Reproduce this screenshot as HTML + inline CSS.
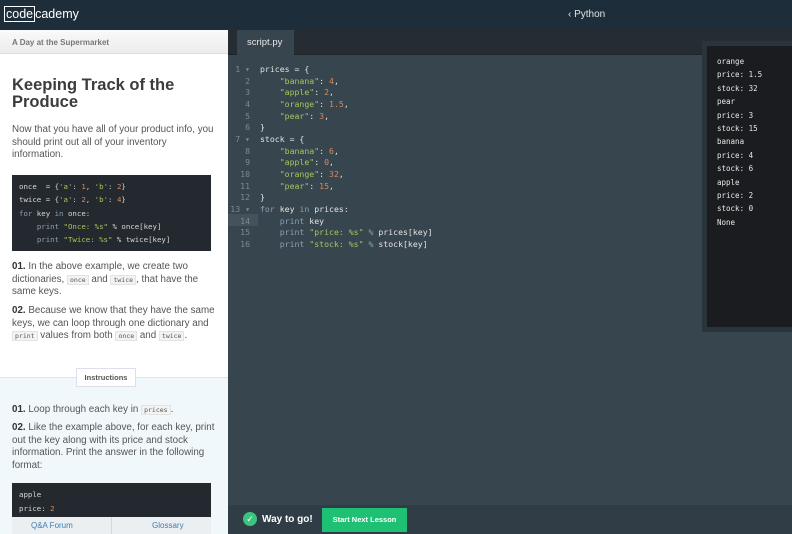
<!DOCTYPE html>
<html><head><style>
*{margin:0;padding:0;box-sizing:border-box}
body{width:792px;height:534px;overflow:hidden;font-family:"Liberation Sans","DejaVu Sans",sans-serif;background:#37454f;position:relative}
.top{position:absolute;left:0;top:0;width:792px;height:30px;background:#1d2d3a}
.logo{position:absolute;left:4px;top:7px;color:#fff;font-size:12.5px;font-family:"Liberation Sans",sans-serif}
.logo span{border:1.5px solid #fff;padding:0 1px}
.py{position:absolute;left:568px;top:9px;color:#dfe6ea;font-size:10px}
.left{position:absolute;left:0;top:30px;width:228px;height:504px;background:#fff;overflow:hidden}
.lh{height:24px;background:linear-gradient(#fafafa,#ececec);border-bottom:1px solid #ddd;font-size:8px;font-weight:bold;color:#777;padding:8px 12px}
h1{position:absolute;left:12px;top:47px;font-size:16.5px;line-height:17px;color:#3c3c3c;font-weight:bold;width:210px}
p{font-size:9.8px;line-height:12.7px;color:#555;position:absolute;left:12px;width:205px}
p b{color:#333}
code{font-family:"DejaVu Sans Mono",monospace;font-size:6.5px;background:#f3f3f3;border:1px solid #e3e3e3;padding:0 2px;color:#555}
.cb{position:absolute;left:12px;width:199px;background:#23292e;font-family:"DejaVu Sans Mono",monospace;font-size:7.4px;line-height:13.3px;color:#d8d8d8;padding:5px 7px;white-space:pre}
.s{color:#a6c65b}.n{color:#d68a5d}.k{color:#8aa0b5}
.instr{position:absolute;left:0;top:347px;width:228px;height:160px;background:#f1f8fc;border-top:1px solid #dbe7ee}
.ibtn{position:absolute;left:76px;top:338px;width:60px;height:19px;background:#fff;border:1px solid #dde;font-size:7.5px;font-weight:bold;color:#555;text-align:center;line-height:17px}
.foot{position:absolute;left:12px;top:487px;width:199px;height:17px;background:#eceff1;font-size:8px;color:#3a7fb5}
.foot div{position:absolute;top:4px}
.tabs{position:absolute;left:228px;top:30px;width:564px;height:25px;background:#252d33;border-bottom:1px solid #1e2428}
.tab{position:absolute;left:9px;top:0;width:57px;height:25px;background:#37454f;color:#e6e6e6;font-size:9.5px;padding:7px 10px}
.code{position:absolute;left:228px;top:64px;font-family:"DejaVu Sans Mono",monospace;font-size:8.2px;line-height:11.67px;color:#e3e3e3;white-space:pre}
.ln{display:inline-block;width:22px;text-align:right;color:#7b8a94;margin-right:10px}
.hl{position:absolute;left:228px;top:214px;width:30px;height:12px;background:#44525c}
.out{position:absolute;left:702px;top:41px;width:92px;height:291px;background:#2a343b;padding:5px 0 5px 5px}
.out div{background:#1b1c1f;height:100%;font-family:"DejaVu Sans Mono",monospace;font-size:7.5px;line-height:13.4px;color:#e8e8e8;padding:9px 10px;white-space:pre}
.bot{position:absolute;left:228px;top:505px;width:564px;height:29px;background:#303d46}
.chk{position:absolute;left:243px;top:512px;width:14px;height:14px;border-radius:50%;background:#3ac47d;color:#fff;font-size:9px;text-align:center;line-height:14px;font-weight:bold}
.way{position:absolute;left:262px;top:514px;color:#fff;font-size:10px;font-weight:bold}
.next{position:absolute;left:322px;top:508px;width:85px;height:24px;background:#1ec174;color:#fff;font-size:7.5px;font-weight:bold;text-align:center;line-height:24px}
</style></head><body>
<div class="top"><div class="logo"><span>code</span>cademy</div><div class="py">‹ Python</div></div>
<div class="left">
<div class="lh">A Day at the Supermarket</div>
<h1>Keeping Track of the Produce</h1>
<p style="top:94px">Now that you have all of your product info, you should print out all of your inventory information.</p>
<div class="cb" style="top:145px;height:76px">once  = {<span class="s">'a'</span>: <span class="n">1</span>, <span class="s">'b'</span>: <span class="n">2</span>}
twice = {<span class="s">'a'</span>: <span class="n">2</span>, <span class="s">'b'</span>: <span class="n">4</span>}
<span class="k">for</span> key <span class="k">in</span> once:
    <span class="k">print</span> <span class="s">"Once: %s"</span> % once[key]
    <span class="k">print</span> <span class="s">"Twice: %s"</span> % twice[key]</div>
<p style="top:231px"><b>01.</b> In the above example, we create two dictionaries, <code>once</code> and <code>twice</code>, that have the same keys.</p>
<p style="top:275px"><b>02.</b> Because we know that they have the same keys, we can loop through one dictionary and <code>print</code> values from both <code>once</code> and <code>twice</code>.</p>
<div class="instr"></div>
<div class="ibtn">Instructions</div>
<p style="top:374px"><b>01.</b> Loop through each key in <code>prices</code>.</p>
<p style="top:392px"><b>02.</b> Like the example above, for each key, print out the key along with its price and stock information. Print the answer in the following format:</p>
<div class="cb" style="top:453px;height:40px;line-height:13.5px">apple
price: <span class="n">2</span></div>
<div class="foot"><div style="left:19px">Q&amp;A Forum</div><div style="left:140px">Glossary</div><div style="position:absolute;left:99px;top:0;width:1px;height:17px;background:#d5d9dc"></div></div>
</div>
<div class="tabs"><div class="tab">script.py</div></div>
<div class="hl"></div>
<div class="code"><span class="ln">1 ▾</span>prices = {
<span class="ln">2</span>    <span class="s">"banana"</span>: <span class="n">4</span>,
<span class="ln">3</span>    <span class="s">"apple"</span>: <span class="n">2</span>,
<span class="ln">4</span>    <span class="s">"orange"</span>: <span class="n">1.5</span>,
<span class="ln">5</span>    <span class="s">"pear"</span>: <span class="n">3</span>,
<span class="ln">6</span>}
<span class="ln">7 ▾</span>stock = {
<span class="ln">8</span>    <span class="s">"banana"</span>: <span class="n">6</span>,
<span class="ln">9</span>    <span class="s">"apple"</span>: <span class="n">0</span>,
<span class="ln">10</span>    <span class="s">"orange"</span>: <span class="n">32</span>,
<span class="ln">11</span>    <span class="s">"pear"</span>: <span class="n">15</span>,
<span class="ln">12</span>}
<span class="ln">13 ▾</span><span class="k">for</span> key <span class="k">in</span> prices:
<span class="ln">14</span>    <span class="k">print</span> key
<span class="ln">15</span>    <span class="k">print</span> <span class="s">"price: %s"</span> <span class="k">%</span> prices[key]
<span class="ln">16</span>    <span class="k">print</span> <span class="s">"stock: %s"</span> <span class="k">%</span> stock[key]</div>
<div class="out"><div>orange
price: 1.5
stock: 32
pear
price: 3
stock: 15
banana
price: 4
stock: 6
apple
price: 2
stock: 0
None</div></div>
<div class="bot"></div>
<div class="chk">✓</div>
<div class="way">Way to go!</div>
<div class="next">Start Next Lesson</div>
</body></html>
